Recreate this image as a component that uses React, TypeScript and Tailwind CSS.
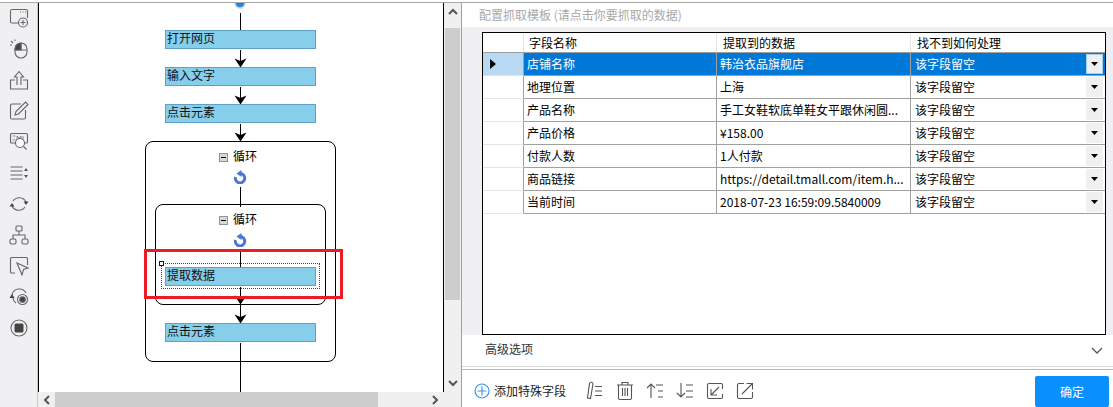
import React from "react";

const font = { fontFamily: '"Noto Sans CJK SC", "Liberation Sans", sans-serif' };

const rows = [
  ["店铺名称", "韩治衣品旗舰店"],
  ["地理位置", "上海"],
  ["产品名称", "手工女鞋软底单鞋女平跟休闲圆..."],
  ["产品价格", "¥158.00"],
  ["付款人数", "1人付款"],
  ["商品链接", "https://detail.tmall.com/item.h..."],
  ["当前时间", "2018-07-23 16:59:09.5840009"],
];

const ic = "fill-none stroke-[#666] stroke-[1.1]";

function SideIcons() {
  return (
    <div className="flex flex-col items-center pt-[5px] gap-[11px]">
      <svg width="20" height="20" viewBox="0 0 20 20" className={ic}>
        <path d="M10 15H3a1.500 1.500 0 0 1-1.500-1.500V3A1.500 1.500 0 0 1 3 1.500h14A1.500 1.500 0 0 1 18.500 3v7" />
        <path d="M11 4h1M13.500 4h1M16 4h1" />
        <circle cx="14" cy="14.500" r="4.500" />
        <path d="M14 12v5M11.500 14.500h5" />
      </svg>
      <svg width="20" height="20" viewBox="0 0 20 20" className={ic}>
        <rect x="6" y="4" width="12" height="15" rx="6" />
        <path d="M6 11h12M12 4v7" />
        <path d="M12 4a6 6 0 0 0-6 6v1h6z" fill="#444" />
        <path d="M2 2l2 2M1 6h2M6 0.500v1.500" />
      </svg>
      <svg width="20" height="20" viewBox="0 0 20 20" className={ic}>
        <path d="M6 10H1.500v9h17v-9H14" />
        <path d="M8 15V7H5.500L10 1.500 14.500 7H12v8" />
      </svg>
      <svg width="20" height="20" viewBox="0 0 20 20" className={ic}>
        <path d="M12 3H3a1.500 1.500 0 0 0-1.500 1.500v12A1.500 1.500 0 0 0 3 18h12a1.500 1.500 0 0 0 1.500-1.500V9" />
        <path d="M6 14l1-3.500L16.500 1l2.500 2.500L9.500 13z" />
      </svg>
      <svg width="20" height="20" viewBox="0 0 20 20" className={ic}>
        <path d="M6 11H2.500A1 1 0 0 1 1.500 10V2.500A1 1 0 0 1 2.500 1.500h15a1 1 0 0 1 1 1V10a1 1 0 0 1-1 1H16" />
        <path d="M3.500 4h3M3.500 8h3M8 8V4l2 2 2-2v4M14 4v4" strokeWidth="0.7" />
        <circle cx="11" cy="11" r="4.500" fill="#fff" />
        <path d="M14.500 14.500l3 3" />
      </svg>
      <svg width="20" height="20" viewBox="0 0 20 20" className={ic}>
        <path d="M1.500 4h12M1.500 8h12M1.500 12h12M1.500 16h12" />
        <path d="M17 5l-2 3h4zM17 15l-2-3h4z" fill="#555" stroke="none" />
      </svg>
      <svg width="20" height="20" viewBox="0 0 20 20" className={ic}>
        <path d="M4 7a7.500 7.500 0 0 1 13 1" />
        <path d="M16 13a7.500 7.500 0 0 1-13-1" />
        <path d="M14.500 7.500h5L17 11zM0.500 12.500h5L3 9z" fill="#444" stroke="none" />
      </svg>
      <svg width="20" height="20" viewBox="0 0 20 20" className={ic}>
        <rect x="7" y="1" width="6" height="5" rx="1" />
        <rect x="1" y="14" width="6" height="5" rx="1.500" />
        <rect x="13" y="14" width="6" height="5" rx="1.500" />
        <path d="M10 6v4M4 14v-4h12v4" />
      </svg>
      <svg width="20" height="20" viewBox="0 0 20 20" className={ic}>
        <path d="M6 17H2.500A1 1 0 0 1 1.500 16V2.500a1 1 0 0 1 1-1h15a1 1 0 0 1 1 1V9" />
        <path d="M8 7l11 5-4.500 1.500L13 19z" />
      </svg>
      <svg width="20" height="20" viewBox="0 0 20 20" className={ic}>
        <path d="M3 8a7.500 7.500 0 0 1 14-2" />
        <path d="M7 16a7 7 0 0 1-3-5" />
        <path d="M0.500 11h5L3 7z" fill="#444" stroke="none" />
        <circle cx="13.500" cy="12.500" r="5" />
        <circle cx="13.500" cy="12.500" r="2.800" fill="#444" />
      </svg>
      <svg width="20" height="20" viewBox="0 0 20 20" className={ic}>
        <circle cx="10" cy="10" r="8" />
        <rect x="5.500" y="5.500" width="9" height="9" rx="1.500" fill="#444" stroke="none" />
      </svg>
    </div>
  );
}

function Arrow({ y }: { y: number }) {
  return (
    <svg width="13" height="10" viewBox="0 0 13 10" className="absolute left-[195px]" style={{ top: y }}>
      <path d="M0.500 0.500L6.500 3l6-2.500L6.500 9.500z" fill="#000" />
    </svg>
  );
}

function Wire({ top, h }: { top: number; h: number }) {
  return <div className="absolute left-[201px] w-[1px] bg-black" style={{ top, height: h }} />;
}

function Node({ y, label }: { y: number; label: string }) {
  return (
    <div
      className="absolute left-[126px] w-[151px] h-[19px] bg-[#87ceeb] border border-[#5f9fc9] text-[12px] leading-[13px] pl-[1px] text-[#111] whitespace-nowrap"
      style={{ top: y }}
    >
      {label}
    </div>
  );
}

function LoopTitle({ y }: { y: number }) {
  return (
    <>
      <div className="absolute left-[180px] flex items-start gap-[5px]" style={{ top: y }}>
        <div className="mt-[5px] w-[9px] h-[9px] border border-[#8296ad] bg-[#d9d9d2] flex items-center justify-center">
          <div className="w-[5px] h-[1px] bg-black" />
        </div>
        <span className="text-[12px] leading-[16px] text-black">循环</span>
      </div>
      <svg width="14" height="14" viewBox="0 0 14 14" className="absolute left-[194px]" style={{ top: y + 22 }}>
        <path d="M7 3.500A4.700 4.700 0 1 1 2.500 7" fill="none" stroke="#4a76d4" strokeWidth="3" />
        <path d="M8.500 0v7L3.500 3.500z" fill="#4a76d4" />
      </svg>
    </>
  );
}

function Flow() {
  return (
    <div className="relative flex-1 h-full overflow-hidden bg-white">
      <svg width="14" height="10" viewBox="0 0 14 10" className="absolute left-[194px] top-0">
        <circle cx="7" cy="0" r="5" fill="#2f80d8" stroke="#b5dcf7" strokeWidth="1.500" />
      </svg>
      <Wire top={10} h={19} />
      <Node y={27} label="打开网页" />
      <Wire top={47} h={19} />
      <Arrow y={55} />
      <Node y={64} label="输入文字" />
      <Wire top={84} h={19} />
      <Arrow y={92} />
      <Node y={101} label="点击元素" />
      <Wire top={121} h={18} />
      <Arrow y={129} />

      <div className="absolute left-[106px] top-[138px] w-[191px] h-[221px] border border-black rounded-[8px]" />
      <LoopTitle y={145} />
      <Wire top={184} h={20} />
      <div className="absolute left-[116px] top-[201px] w-[171px] h-[101px] border border-black rounded-[8px]" />
      <LoopTitle y={208} />
      <Wire top={247} h={17} />

      <div className="absolute left-[122px] top-[260px] w-[159px] h-[26px] border border-dotted border-[#444]" />
      <div className="absolute left-[120px] top-[258px] w-[5px] h-[5px] border border-[#0000c0] bg-white" />
      <Node y={264} label="提取数据" />
      <Wire top={284} h={36} />
      <Arrow y={292} />
      <Arrow y={311} />
      <Node y={320} label="点击元素" />
      <Wire top={340} h={49} />

      <div className="absolute left-[105px] top-[246px] w-[199px] h-[50px] border-[3px] border-[#ed1c24]" />
    </div>
  );
}

function Chevron({ d, className }: { d: string; className: string }) {
  return (
    <svg width="10" height="10" viewBox="0 0 10 10" className={className}>
      <path d={d} fill="none" stroke="#555" strokeWidth="2" />
    </svg>
  );
}

function Table() {
  return (
    <div className="ml-[20px] mr-[7px] h-[303px] border border-black bg-white text-[12px] text-black">
      <div className="flex h-[20px] border-b border-[#a0a0a0]">
        <div className="w-[41px] border-r border-[#e4e4e4]" />
        <div className="w-[193px] border-r border-[#e4e4e4] pl-[5px] leading-[20px]">字段名称</div>
        <div className="w-[194px] border-r border-[#e4e4e4] pl-[6px] leading-[20px]">提取到的数据</div>
        <div className="flex-1 pl-[6px] leading-[20px]">找不到如何处理</div>
      </div>
      {rows.map((row, i) => (
        <div key={row[0]} className={`flex h-[23px] ${i === 0 ? "bg-[#0078d7] text-white" : ""}`}>
          <div className={`w-[41px] border-r border-r-[#a0a0a0] border-b border-b-[#e4e4e4] flex items-center pl-[7px] ${i === 0 ? "bg-[#b9d9f2]" : "bg-white"}`}>
            {i === 0 && (
              <svg width="6" height="10" viewBox="0 0 6 10">
                <path d="M0 0l6 5-6 5z" fill="#000" />
              </svg>
            )}
          </div>
          <div className="w-[193px] border-r border-b border-[#a0a0a0] pl-[3px] leading-[22px]">{row[0]}</div>
          <div className="w-[194px] border-r border-b border-[#a0a0a0] pl-[3px] leading-[22px] whitespace-nowrap overflow-hidden">{row[1]}</div>
          <div className="flex-1 border-b border-[#a0a0a0] pl-[4px] leading-[22px] relative">
            该字段留空
            <div className={`absolute right-[2px] top-[1px] w-[17px] h-[20px] bg-[#f0f0f0] flex items-center justify-center ${i === 0 ? "border border-[#a9cdec]" : ""}`}>
              <svg width="7" height="4" viewBox="0 0 7 4">
                <path d="M0 0h7L3.500 4z" fill="#000" />
              </svg>
            </div>
          </div>
        </div>
      ))}
    </div>
  );
}

function Footer() {
  const tool = "fill-none stroke-[#555] stroke-[1.1]";
  return (
    <div className="flex items-start h-[37px] pl-[12px] pr-[4px] pt-[6px]">
      <div className="flex items-center h-[29px] text-[12px] text-[#222]">
        <svg width="16" height="16" viewBox="0 0 16 16" className="fill-none stroke-[#3a97ea] stroke-[1.2] mt-[1px]">
          <circle cx="8" cy="8" r="7" />
          <path d="M8 3.500v9M3.500 8h9" />
        </svg>
        <span className="ml-[4px]">添加特殊字段</span>
      </div>
      <div className="flex items-center h-[29px] ml-[20px] gap-[12px]">
        <svg width="18" height="19" viewBox="0 0 18 19" className={tool}>
          <path d="M1.500 17L3.500 2.500a1.800 1.800 0 0 1 3.500 .5L4.500 17.500z" />
          <path d="M9 5.500h7M9 10h7M9 14.500h7" />
        </svg>
        <svg width="18" height="19" viewBox="0 0 18 19" className={tool}>
          <path d="M1 4h16M6 4V1.500h6V4M2.500 4v13a1.500 1.500 0 0 0 1.500 1.500h10a1.500 1.500 0 0 0 1.500-1.500V4M6.500 7v8M9 7v8M11.500 7v8" />
        </svg>
        <svg width="18" height="19" viewBox="0 0 18 19" className={tool}>
          <path d="M5 17V3M1 7l4-4 4 4M10 4h7M12 10h5M12 16h5" />
        </svg>
        <svg width="18" height="19" viewBox="0 0 18 19" className={tool}>
          <path d="M5 2v14M1 12l4 4 4-4M10 4h7M10 10h7M10 16h7" />
        </svg>
        <svg width="18" height="18" viewBox="0 0 18 18" className={tool}>
          <path d="M16.500 7V3a1.500 1.500 0 0 0-1.500-1.500H3A1.500 1.500 0 0 0 1.500 3v12A1.500 1.500 0 0 0 3 16.500h12a1.500 1.500 0 0 0 1.500-1.500v-3" />
          <path d="M13 5l-8 8M5 7v6h6" />
        </svg>
        <svg width="18" height="18" viewBox="0 0 18 18" className={tool}>
          <path d="M8 1.500H3A1.500 1.500 0 0 0 1.500 3v12A1.500 1.500 0 0 0 3 16.500h12a1.500 1.500 0 0 0 1.500-1.500v-5" />
          <path d="M6 12l10-10M10.500 1.500h6v6" />
        </svg>
      </div>
      <div className="ml-auto w-[74px] h-[31px] rounded-[2px] bg-[#0a8fff] text-white text-[12px] flex items-center justify-center">
        确定
      </div>
    </div>
  );
}

export default function App() {
  return (
    <div className="w-[1113px] h-[407px] overflow-hidden bg-white" style={font}>
      <div className="h-[2px] bg-white" />
      <div className="flex h-[405px] border-t border-[#a8a8a8]">
        <div className="w-[38px] bg-[#f0f0f3] shrink-0 border-r border-[#c8c8c8]">
          <SideIcons />
        </div>
        <div className="w-[424px] shrink-0 flex flex-col border-r border-[#a0a0a0]">
          <div className="flex h-[389px] border-l border-black">
            <Flow />
            <div className="w-[1px] bg-black" />
            <div className="w-[17px] bg-[#f0f0f0] flex flex-col items-center">
              <Chevron d="M1 7l4-4 4 4" className="mt-[4px]" />
              <div className="mt-[11px] w-[15px] h-[272px] bg-[#cdcdcd]" />
              <Chevron d="M1 3l4 4 4-4" className="mt-[78px]" />
            </div>
          </div>
          <div className="flex h-[15px] bg-[#f0f0f0] items-center">
            <div className="w-[17px] flex justify-center">
              <Chevron d="M7 1L3 5l4 4" className="" />
            </div>
            <div className="w-[323px] h-full bg-[#cdcdcd]" />
            <Chevron d="M3 1l4 4-4 4" className="ml-[52px]" />
          </div>
        </div>
        <div className="flex-1 flex flex-col">
          <div className="h-[24px] pl-[17px] text-[12px] leading-[24px] text-[#a8a8a8]">配置抓取模板 (请点击你要抓取的数据)</div>
          <div className="h-[308px] bg-[#f0f0f3] pt-[5px]">
            <Table />
          </div>
          <div className="h-[32px] flex items-center justify-between pl-[23px] pr-[10px] text-[12px] text-[#333] border-b border-[#d8d8d8]">
            <span className="mb-[4px]">高级选项</span>
            <svg width="12" height="7" viewBox="0 0 12 7">
              <path d="M1 1l5 5 5-5" fill="none" stroke="#555" strokeWidth="1.300" />
            </svg>
          </div>
          <div className="h-[2px]" />
          <div className="border-t border-[#b8b8b8]">
            <Footer />
          </div>
        </div>
      </div>
    </div>
  );
}
